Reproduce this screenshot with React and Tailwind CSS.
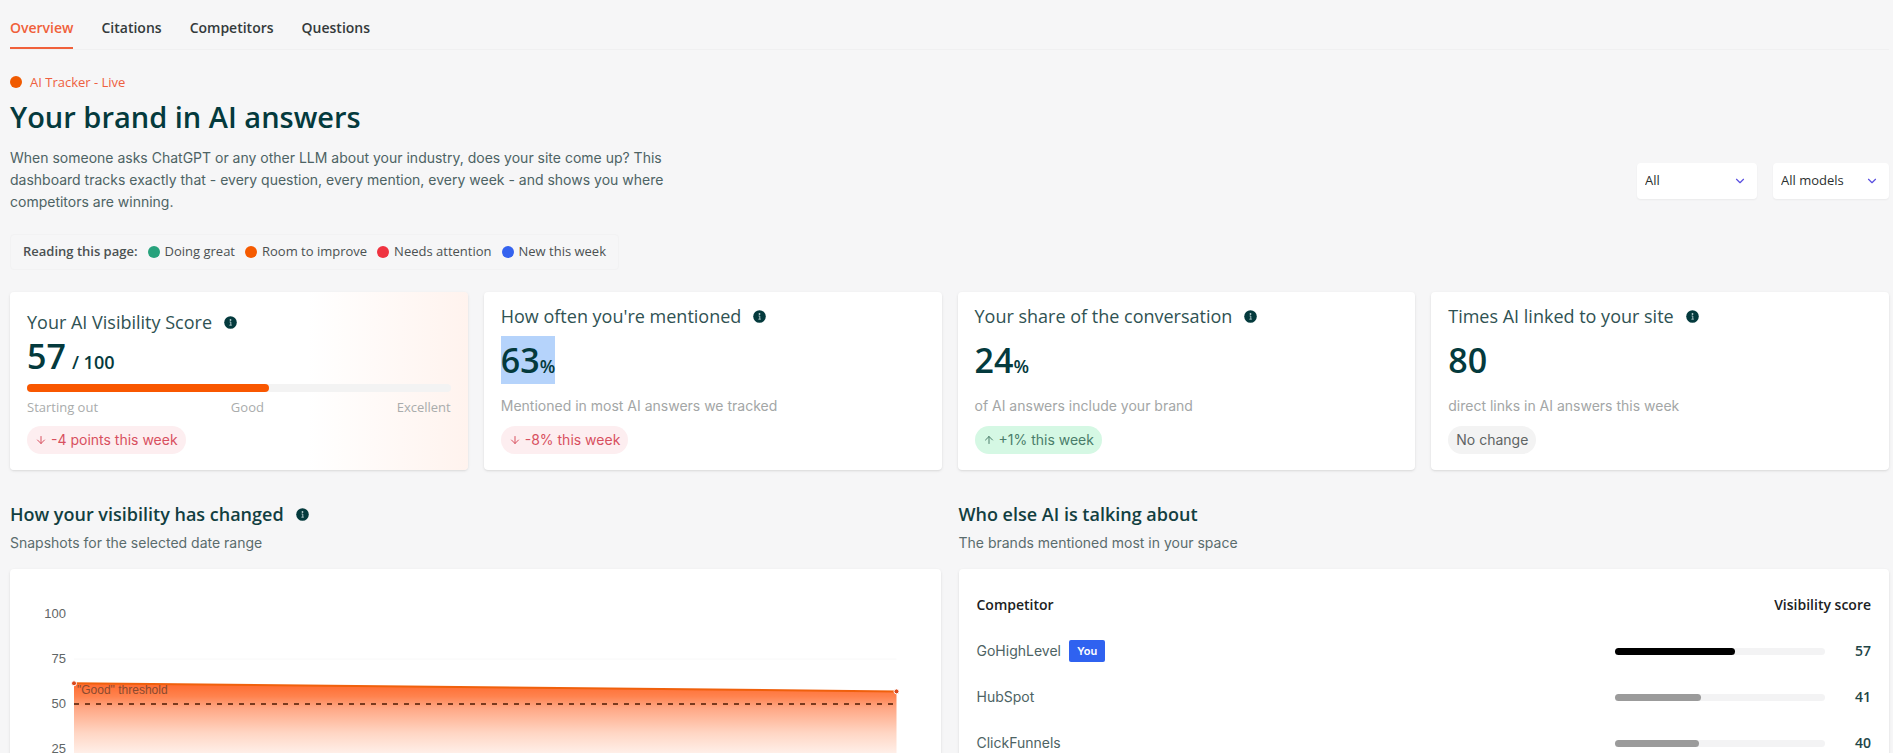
import React, { useState } from 'react';
import { ArrowDown, ArrowUp, ChevronDown } from 'lucide-react';

const TABS = ['Overview', 'Citations', 'Competitors', 'Questions'];

const LEGEND = [
  { label: 'Doing great', dot: 'bg-[#27a27c]' },
  { label: 'Room to improve', dot: 'bg-[#f55a00]' },
  { label: 'Needs attention', dot: 'bg-[#ef3340]' },
  { label: 'New this week', dot: 'bg-[#3563ef]' },
];

const COMPETITORS = [
  { name: 'GoHighLevel', score: 57, you: true },
  { name: 'HubSpot', score: 41 },
  { name: 'ClickFunnels', score: 40 },
];

const TREND = [61.5, 57];
const TICKS = [100, 75, 50, 25];

// ── Small pieces ───────────────────────────────────────────────────────────
const InfoIcon = () => (
  <svg width="13" height="13" viewBox="0 0 13 13" className="shrink-0" aria-hidden="true">
    <circle cx="6.5" cy="6.5" r="6.3" fill="#043a3d" />
    <circle cx="6.5" cy="4" r="0.9" fill="#b9cfd0" />
    <path d="M5.6 6h1.2v3M5.4 9.2h2.4" fill="none" stroke="#b9cfd0" strokeWidth="0.9" />
  </svg>
);

const PILL = {
  down: 'bg-[#fdeef0] text-[#d8505f]',
  up: 'bg-[#d5f8e4] text-[#4a7d6a]',
  flat: 'bg-[#f3f3f3] text-[#5f6464]',
};

const Pill = ({ kind, children }) => (
  <span className={`inline-flex h-7 items-center gap-1 self-start rounded-full px-2 font-['Inter',sans-serif] text-sm ${PILL[kind]}`}>
    {kind === 'down' && <ArrowDown size={12} />}
    {kind === 'up' && <ArrowUp size={12} />}
    {children}
  </span>
);

const Filter = ({ label, options, className }) => (
  <label className={`relative block ${className}`}>
    <span className="sr-only">{label}</span>
    <select className="h-9 w-full appearance-none rounded bg-white pl-2 pr-7 text-[13px] font-medium text-[#2b2f2f] shadow-xs outline-none">
      {options.map((o) => <option key={o}>{o}</option>)}
    </select>
    <ChevronDown size={14} className="pointer-events-none absolute right-2.5 top-[11px] text-[#5a4fe0]" />
  </label>
);

const StatCard = ({ title, value, unit, note, kind, delta, selected }) => (
  <section className="flex flex-col rounded bg-white px-[17px] pt-3 pb-4 shadow-sm">
    <h2 className="flex h-6 items-center gap-3 text-lg text-[#2f5253]">{title} <InfoIcon /></h2>
    <p className="mt-2 flex">
      <span className={`text-[34px] leading-[48px] font-semibold text-[#043a3d] ${selected ? 'bg-[#b5d3fb]' : ''}`}>
        {value}{unit && <span className="text-lg">{unit}</span>}
      </span>
    </p>
    <p className="mt-2.5 mb-2 font-['Inter',sans-serif] text-sm leading-6 text-[#a3a6a6]">{note}</p>
    <Pill kind={kind}>{delta}</Pill>
  </section>
);

const ScoreCard = () => (
  <section className="flex flex-col rounded bg-linear-to-r from-white from-65% to-[#fff3ee] px-[17px] py-4 shadow-sm">
    <h2 className="flex h-7 items-center gap-3 text-lg text-[#2f5253]">Your AI Visibility Score <InfoIcon /></h2>
    <p className="text-[34px] leading-10 font-semibold text-[#043a3d]">
      57<span className="ml-1.5 text-lg">/ 100</span>
    </p>
    <div className="mt-2 h-2 rounded-full bg-[#f3f3f3]">
      <div className="h-2 rounded-full bg-[#f95700]" style={{ width: '57%' }} />
    </div>
    <div className="mt-1 mb-2 flex justify-between text-[13px] leading-[22px] text-[#a9acac]">
      <span>Starting out</span><span>Good</span><span>Excellent</span>
    </div>
    <Pill kind="down">-4 points this week</Pill>
  </section>
);

// ── Trend chart ────────────────────────────────────────────────────────────
const TrendChart = () => {
  const [first, last] = TREND.map((v) => 100 - v);
  return (
    <div className="flex rounded bg-white pt-[35px] pr-11 pl-8 font-['Liberation_Sans',sans-serif] shadow-sm">
      <div className="w-6 text-right text-[13px] text-[#5f6666]">
        {TICKS.map((t) => <div key={t} className="h-[45px] leading-5">{t}</div>)}
      </div>
      <div className="relative mt-[10px] ml-2 h-[180px] flex-1">
        <svg className="absolute inset-0 h-full w-full" viewBox="0 0 100 100" preserveAspectRatio="none">
          <defs>
            <linearGradient id="trend" x1="0" y1="0" x2="0" y2="1">
              <stop offset="0" stopColor="#ff6a2e" />
              <stop offset="0.12" stopColor="#ff834f" />
              <stop offset="0.22" stopColor="#ffa683" />
              <stop offset="0.45" stopColor="#ffd6c4" />
              <stop offset="0.66" stopColor="#fff3ee" />
              <stop offset="1" stopColor="#ffffff" />
            </linearGradient>
          </defs>
          <path d="M0 25H100" stroke="#f8f8f8" vectorEffect="non-scaling-stroke" />
          <path d={`M0 ${first}L100 ${last}V100H0Z`} fill="url(#trend)" />
          <path d={`M0 ${first}L100 ${last}`} stroke="#f0600c" strokeWidth="2" vectorEffect="non-scaling-stroke" />
          <path d="M0 50H100" stroke="#7a3a1e" strokeWidth="2" strokeDasharray="5 6" vectorEffect="non-scaling-stroke" />
        </svg>
        <svg className="absolute inset-0 h-full w-full overflow-visible">
          <circle cx="0" cy={`${first}%`} r="2.5" fill="#d9481c" stroke="#fff" />
          <circle cx="100%" cy={`${last}%`} r="2.5" fill="#d9481c" stroke="#fff" />
        </svg>
        <span className="absolute top-[68px] left-[3px] text-xs text-[#8a4a30]">"Good" threshold</span>
      </div>
    </div>
  );
};

// ── Competitor table ───────────────────────────────────────────────────────
const CompetitorTable = () => (
  <div className="rounded bg-white px-[18px] pt-[13px] shadow-sm">
    <table className="w-full text-sm">
      <thead>
        <tr className="h-[46px] text-[#1b2122]">
          <th className="text-left font-semibold">Competitor</th>
          <th className="text-right font-semibold">Visibility score</th>
        </tr>
      </thead>
      <tbody>
        {COMPETITORS.map(({ name, score, you }) => (
          <tr key={name} className="h-[46px]">
            <td className="font-['Inter',sans-serif] text-[#4d6364]">
              <div className="flex items-center gap-2">
                {name}
                {you && <span className="rounded-xs bg-[#2f62f0] px-2 text-[11px] leading-[22px] font-semibold text-white">You</span>}
              </div>
            </td>
            <td>
              <div className="flex items-center justify-end">
                <div className="h-[7px] w-[210px] rounded-full bg-[#f3f3f4]">
                  <div className={`h-[7px] rounded-full ${you ? 'bg-black' : 'bg-[#9b9b9b]'}`} style={{ width: `${score}%` }} />
                </div>
                <span className="w-[46px] text-right font-semibold text-[#1f4647]">{score}</span>
              </div>
            </td>
          </tr>
        ))}
      </tbody>
    </table>
  </div>
);

export default function App() {
  const [tab, setTab] = useState('Overview');

  return (
    <div className="min-h-screen bg-[#f6f6f7] pr-1 pl-[10px] font-['Open_Sans',sans-serif]">
      <nav className="flex h-[50px] gap-7 border-b border-[#f0f0f1] pt-2">
        {TABS.map((t) => (
          <button
            key={t}
            onClick={() => setTab(t)}
            className={`border-b-2 text-sm font-semibold ${tab === t ? 'border-[#f0603a] text-[#f0603a]' : 'border-transparent text-[#343a3b]'}`}
          >
            {t}
          </button>
        ))}
      </nav>

      <header className="flex items-end justify-between pt-[23px]">
        <div>
          <p className="flex items-center gap-2 text-[13px] leading-[18px] text-[#ee6040]">
            <span className="h-3 w-3 rounded-full bg-[#f05a00]" /> AI Tracker - Live
          </p>
          <h1 className="mt-2 text-[29px] leading-9 font-semibold text-[#043a3d]">Your brand in AI answers</h1>
          <p className="mt-3 max-w-[680px] font-['Inter',sans-serif] text-sm leading-[22px] text-[#4d6364]">
            When someone asks ChatGPT or any other LLM about your industry, does your site come up? This
            dashboard tracks exactly that - every question, every mention, every week - and shows you where
            competitors are winning.
          </p>
        </div>
        <div className="mb-[14px] flex gap-4">
          <Filter label="Topic" options={['All']} className="w-[120px]" />
          <Filter label="Model" options={['All models']} className="w-[116px]" />
        </div>
      </header>

      <div className="mt-[21px] inline-flex h-9 items-center gap-2.5 rounded border border-[#f2f2f3] px-3 text-[13px] text-[#4b5152]">
        <span className="font-semibold">Reading this page:</span>
        {LEGEND.map(({ label, dot }) => (
          <span key={label} className="flex items-center gap-[5px]">
            <span className={`h-3 w-3 rounded-full ${dot}`} /> {label}
          </span>
        ))}
      </div>

      <div className="mt-[22px] grid grid-cols-4 gap-4">
        <ScoreCard />
        <StatCard title="How often you're mentioned" value="63" unit="%" note="Mentioned in most AI answers we tracked" kind="down" delta="-8% this week" selected />
        <StatCard title="Your share of the conversation" value="24" unit="%" note="of AI answers include your brand" kind="up" delta="+1% this week" />
        <StatCard title="Times AI linked to your site" value="80" note="direct links in AI answers this week" kind="flat" delta="No change" />
      </div>

      <div className="mt-8 grid grid-cols-2 gap-[18px]">
        <section>
          <h2 className="flex items-center gap-3 text-lg leading-6 font-semibold text-[#123f41]">How your visibility has changed <InfoIcon /></h2>
          <p className="mt-[5px] mb-[14px] font-['Inter',sans-serif] text-sm leading-6 text-[#5a6c6d]">Snapshots for the selected date range</p>
          <TrendChart />
        </section>
        <section>
          <h2 className="text-lg leading-6 font-semibold text-[#123f41]">Who else AI is talking about</h2>
          <p className="mt-[5px] mb-[14px] font-['Inter',sans-serif] text-sm leading-6 text-[#5a6c6d]">The brands mentioned most in your space</p>
          <CompetitorTable />
        </section>
      </div>
    </div>
  );
}
